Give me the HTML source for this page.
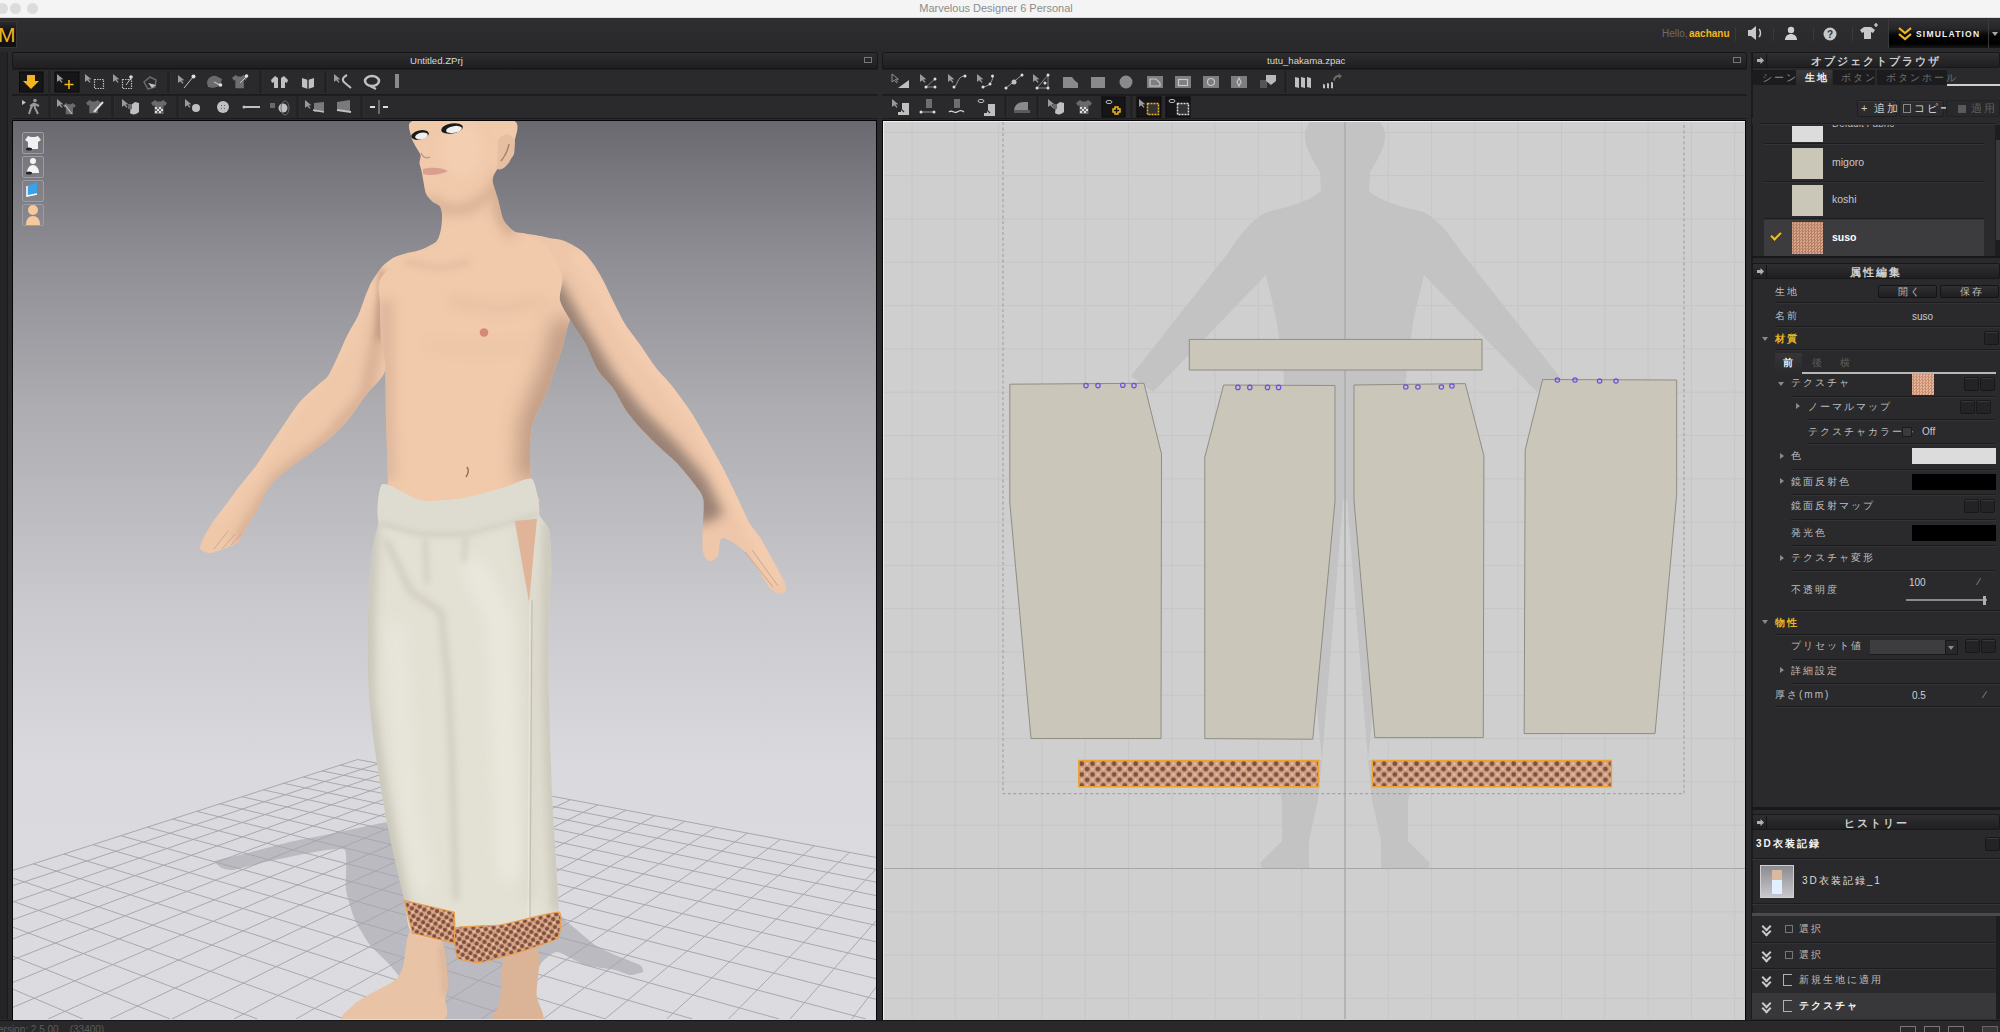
<!DOCTYPE html>
<html><head><meta charset="utf-8">
<style>
*{margin:0;padding:0;box-sizing:border-box}
html,body{width:2000px;height:1032px;overflow:hidden;background:#2a2a2c;font-family:"Liberation Sans",sans-serif;color:#bdbdbd}
.a{position:absolute}
#title{left:0;top:0;width:2000px;height:18px;background:#f4f4f4;border-bottom:1px solid #d8d8d8}
#title .t{left:0;width:1992px;top:2px;text-align:center;font-size:11px;color:#8c8c8c}
.dot{width:11px;height:11px;border-radius:50%;background:#dcdcdc;top:3px}
#appbar{left:0;top:18px;width:2000px;height:34px;background:linear-gradient(#2e2e31,#29292b)}
.hdr{height:17px;top:52px;background:linear-gradient(#2d2d30,#1f1f21);border:1px solid #161618;border-radius:2px;font-size:9.6px;color:#d8d8d8;text-align:center;line-height:15px}
.tb{background:#2a2a2c;border-top:1px solid #1e1e20;border-bottom:1px solid #1c1c1e}
.view3d{left:13px;top:121px;width:863px;height:899px;box-shadow:0 0 0 1px #050507;background:linear-gradient(#6a6970 0px,#8e8d93 134px,#adacb1 284px,#cac9ce 484px,#dad9de 644px,#dcdbe0 898px);overflow:hidden}
.view2d{left:883px;top:121px;width:862px;height:899px;box-shadow:0 0 0 1px #050507;background:#cfcfcf;overflow:hidden;border-top:1px solid #f0f0f0;border-left:1px solid #f0f0f0}
#right{left:1751px;top:52px;width:249px;height:967px;background:#2a2a2c;border-left:2px solid #1b1b1d}
#bottom{left:0;top:1020px;width:2000px;height:12px;background:#29292b;border-top:1px solid #151517}

.tx{position:absolute;font-size:10px;line-height:12px;color:#bfbfbf;white-space:nowrap}
.yl{color:#e9b227;font-weight:bold}
.dv{position:absolute;height:1px;background:#1c1c1f;box-shadow:0 1px 0 #333337}
.rh{position:absolute;left:1752px;width:248px;height:16px;background:linear-gradient(#2f2f32,#1f1f22);border:1px solid #18181a;border-radius:2px}
.rh .tx{width:100%;text-align:center;top:2px;color:#cfcfcf;font-size:10.5px;font-weight:bold}
.arr{position:absolute;width:0;height:0;border-left:4px solid #8a8a8a;border-top:3.5px solid transparent;border-bottom:3.5px solid transparent}
.arrd{position:absolute;width:0;height:0;border-top:4px solid #8a8a8a;border-left:3.5px solid transparent;border-right:3.5px solid transparent}
.sbtn{position:absolute;width:15px;height:14px;background:#232325;border:1px solid #18181a;border-radius:2px;box-shadow:inset 0 1px 0 #38383b}
.blk{position:absolute;background:#000}
</style></head><body>
<div id="title" class="a">
  <div class="a dot" style="left:-3px"></div>
  <div class="a dot" style="left:10px"></div>
  <div class="a dot" style="left:27px"></div>
  <div class="a t">Marvelous Designer 6 Personal</div>
</div>
<div id="appbar" class="a"></div>
<div class="a" style="left:0;top:21px;width:17px;height:27px;background:linear-gradient(#2a2a2c,#0e0e0e 50%,#121212);border:1px solid #353537;border-left:none"></div>
<div class="a" style="left:-2px;top:23px;font-size:21px;line-height:24px;color:#f0b222;font-family:'Liberation Sans',sans-serif">M</div>
<div class="tx" style="left:1662px;top:28px;color:#6c6c6c;font-size:10px">Hello,</div><div class="tx" style="left:1689px;top:28px;color:#f2b51c;font-size:10px;font-weight:bold">aachanu</div>
<div class="a" style="left:1735px;top:27px;width:1px;height:14px;background:#3a3a3c"></div>
<div class="a" style="left:1773px;top:27px;width:1px;height:14px;background:#3a3a3c"></div>
<div class="a" style="left:1813px;top:27px;width:1px;height:14px;background:#3a3a3c"></div>
<div class="a" style="left:1852px;top:27px;width:1px;height:14px;background:#3a3a3c"></div>
<svg class="a" style="left:1740px;top:20px" width="150" height="30" viewBox="1740 20 150 30">
<path d="M1748 30h3l5-4v14l-5-4h-3z" fill="#c8c8c8"/><path d="M1759 29c2 2 2 6 0 8" stroke="#c8c8c8" stroke-width="1.5" fill="none"/>
<circle cx="1791" cy="30" r="3.2" fill="#d0d0d0"/><path d="M1785 40c0-4 3-6 6-6s6 2 6 6z" fill="#d0d0d0"/>
<circle cx="1830" cy="34" r="6.5" fill="#c8c8c8"/><text x="1827" y="38" font-size="10" font-weight="bold" fill="#333" font-family="Liberation Sans">?</text>
<path d="M1860 30l4-3h7l4 3l-2 3l-2-1v7h-7v-7l-2 1z" fill="#c8c8c8"/><path d="M1874 25h4M1876 23v4" stroke="#e0e0e0" stroke-width="1.2"/>
</svg>
<div class="a" style="left:1888px;top:19px;width:100px;height:29px;background:linear-gradient(#313134 0%,#262628 35%,#070707 55%,#000 85%,#161617 100%);border-left:1px solid #3a3a3c"></div>
<div class="a" style="left:1988px;top:19px;width:12px;height:29px;background:linear-gradient(#313134 0%,#262628 35%,#070707 55%,#000 85%,#161617 100%);border-left:1px solid #3a3a3c"></div>
<svg class="a" style="left:1896px;top:26px" width="20" height="16" viewBox="0 0 20 16"><path d="M3 2l6 5l6-5M3 8l6 5l6-5" stroke="#f2b51c" stroke-width="2.2" fill="none"/></svg>
<div class="tx" style="left:1916px;top:28px;color:#f0f0f0;font-size:8.5px;font-weight:bold;letter-spacing:1.2px">SIMULATION</div>
<div class="arrd" style="left:1992px;top:32px;border-top-color:#aaa"></div>

<!-- left strip -->
<div class="a" style="left:0;top:52px;width:8px;height:967px;background:#242426;border-right:1px solid #1a1a1c"></div>
<!-- 3D panel -->
<div class="a hdr" style="left:12px;width:866px"><span class="a" style="left:397px;top:0">Untitled.ZPrj</span><div class="a" style="left:851px;top:4px;width:8px;height:6px;border:1.5px solid #777"></div></div>
<div class="a tb" style="left:12px;top:69px;width:866px;height:26px"></div>
<div class="a tb" style="left:12px;top:95px;width:866px;height:24px"></div>
<div class="a view3d"><svg width="863" height="898" viewBox="13 121 863 898" style="position:absolute;left:0;top:0">
<defs><pattern id="hem2d" width="10.8" height="10.8" patternUnits="userSpaceOnUse" x="1079" y="761"><rect width="10.8" height="10.8" fill="#d2a184"/><circle cx="2.7" cy="2.7" r="2.4" fill="#7a5143"/><circle cx="8.1" cy="8.1" r="2.4" fill="#7a5143"/><circle cx="8.1" cy="2.7" r="1" fill="#ecd0b0"/><circle cx="2.7" cy="8.1" r="1" fill="#ecd0b0"/></pattern></defs>
<path d="M357.6 759.5L876.0 857.4 M340.2 765.1L876.0 869.4 M322.1 770.9L876.0 882.1 M303.3 777.0L876.0 895.6 M283.7 783.3L876.0 910.0 M263.3 789.8L876.0 925.4 M242.0 796.7L876.0 941.9 M219.8 803.8L876.0 959.6 M196.7 811.3L876.0 978.7 M172.5 819.0L876.0 999.3 M147.2 827.2L866.1 1019.0 M120.8 835.7L779.3 1019.0 M93.0 844.6L692.5 1019.0 M63.9 854.0L605.6 1019.0 M33.3 863.8L518.6 1019.0 M13.0 878.1L431.6 1019.0 M13.0 901.3L344.5 1019.0 M13.0 927.2L257.4 1019.0 M13.0 956.3L170.2 1019.0 M13.0 989.2L82.9 1019.0 M357.6 759.5L13.0 870.4 M378.8 763.5L13.0 885.6 M400.5 767.6L13.0 901.9 M422.8 771.8L13.0 919.6 M445.8 776.1L13.0 938.8 M469.3 780.6L13.0 959.7 M493.6 785.2L13.0 982.4 M518.5 789.9L13.0 1007.4 M544.2 794.7L48.1 1019.0 M570.6 799.7L110.1 1019.0 M597.9 804.9L172.0 1019.0 M625.9 810.2L234.0 1019.0 M654.9 815.6L295.9 1019.0 M684.8 821.3L357.8 1019.0 M715.6 827.1L419.6 1019.0 M747.4 833.1L481.4 1019.0 M780.3 839.4L543.2 1019.0 M814.3 845.8L605.0 1019.0 M849.5 852.4L666.7 1019.0 M876.0 869.3L728.5 1019.0 M876.0 920.8L790.1 1019.0 M876.0 987.3L851.8 1019.0" stroke="#a9a8ae" stroke-width="1" fill="none"/>
<defs>
<filter id="bl3" filterUnits="userSpaceOnUse" x="0" y="100" width="900" height="950"><feGaussianBlur stdDeviation="3"/></filter>
<filter id="bl6" filterUnits="userSpaceOnUse" x="0" y="100" width="900" height="950"><feGaussianBlur stdDeviation="6"/></filter>
<filter id="bl10" filterUnits="userSpaceOnUse" x="0" y="100" width="900" height="950"><feGaussianBlur stdDeviation="10"/></filter>
<pattern id="hem" width="8" height="8" patternUnits="userSpaceOnUse" patternTransform="rotate(-12)"><rect width="8" height="8" fill="#d6a384"/><circle cx="2" cy="2" r="2.1" fill="#7e4f40"/><circle cx="6" cy="6" r="2.1" fill="#7e4f40"/><circle cx="6" cy="2" r="0.9" fill="#f0d0a8"/></pattern>
<clipPath id="cT"><path d="M412.6 121.0C405.7 123.1 410.5 132.5 411.0 136.0C411.5 139.5 414.7 144.5 416.0 147.0C417.3 149.5 420.0 152.9 420.5 155.0C421.0 157.1 419.4 160.9 419.5 163.0C419.6 165.1 421.0 168.5 421.5 171.0C422.0 173.5 422.9 178.9 423.5 182.0C424.1 185.1 424.9 191.3 426.2 194.0C427.5 196.7 431.2 200.5 433.0 202.1C434.8 203.7 438.6 204.6 439.8 206.2C441.0 207.8 441.8 211.0 442.0 214.0C442.2 217.0 441.8 225.3 441.0 229.0C440.2 232.7 438.8 239.2 436.0 242.0C433.2 244.8 424.7 248.3 420.0 250.0C415.3 251.7 406.1 252.7 401.0 255.0C395.9 257.3 385.3 263.0 382.0 267.0C378.7 271.0 376.4 279.9 376.0 285.0C375.6 290.1 378.5 297.8 379.0 305.0C379.5 312.2 379.2 330.9 380.0 339.0C380.8 347.1 384.2 355.6 385.0 366.0C385.8 376.4 385.6 401.8 386.0 417.0C386.4 432.2 387.5 467.3 388.0 480.0C388.5 492.7 370.9 508.5 390.0 512.0C409.1 515.5 512.2 509.7 531.0 506.0C549.8 502.3 531.1 491.7 531.0 484.0C530.9 476.3 529.7 456.3 530.0 448.0C530.3 439.7 530.9 428.9 533.0 422.0C535.1 415.1 542.8 402.7 545.6 396.0C548.4 389.3 551.8 378.3 554.0 372.0C556.2 365.7 560.1 355.1 562.0 349.0C563.9 342.9 565.9 332.5 568.0 326.0C570.1 319.5 575.1 307.5 578.0 300.0C580.9 292.5 590.4 276.9 590.0 270.0C589.6 263.1 581.0 252.4 575.0 248.0C569.0 243.6 552.3 239.0 545.0 237.0C537.7 235.0 524.3 233.9 520.0 233.0C515.7 232.1 515.2 232.4 513.0 230.6C510.8 228.8 505.5 224.0 503.5 219.8C501.5 215.6 499.5 204.7 498.1 199.4C496.7 194.1 492.7 184.6 492.7 180.4C492.7 176.2 495.4 171.5 498.1 168.2C500.8 164.9 510.8 159.4 513.0 156.0C515.2 152.6 514.2 147.1 514.4 142.4C514.6 137.7 521.3 124.0 514.4 121.0C507.5 118.0 476.6 120.0 463.0 120.0C449.4 120.0 419.5 118.9 412.6 121.0Z"/></clipPath><clipPath id="cL"><path d="M440.0 240.0C446.4 236.5 434.9 247.3 431.0 249.0C427.1 250.7 415.8 251.9 411.0 253.0C406.2 254.1 398.9 255.1 395.0 257.0C391.1 258.9 385.2 263.5 382.0 267.0C378.8 270.5 373.4 278.6 371.0 283.0C368.6 287.4 365.7 295.6 364.0 300.0C362.3 304.4 360.3 311.2 358.0 316.0C355.7 320.8 349.7 330.7 347.0 336.0C344.3 341.3 340.5 350.7 338.0 356.0C335.5 361.3 330.7 372.1 328.0 376.0C325.3 379.9 321.9 381.4 318.0 385.0C314.1 388.6 304.2 396.7 299.0 403.0C293.8 409.3 282.9 426.4 279.0 432.0C275.1 437.6 273.1 440.5 270.0 445.0C266.9 449.5 260.1 460.4 256.0 466.0C251.9 471.6 242.7 482.2 239.0 487.0C235.3 491.8 231.2 497.7 228.0 502.0C224.8 506.3 218.1 514.6 215.0 519.0C211.9 523.4 207.0 531.1 205.0 535.0C203.0 538.9 200.0 545.7 200.0 548.0C200.0 550.3 203.5 551.3 205.0 552.0C206.5 552.7 208.9 553.3 211.0 553.0C213.1 552.7 217.4 551.5 221.0 550.0C224.6 548.5 234.7 544.9 238.0 542.0C241.3 539.1 243.2 532.7 246.0 528.0C248.8 523.3 256.3 511.8 259.0 507.0C261.7 502.2 263.3 496.0 266.0 492.0C268.7 488.0 274.6 481.1 279.0 477.0C283.4 472.9 292.5 465.9 299.0 461.0C305.5 456.1 321.5 445.5 328.0 440.0C334.5 434.5 342.9 426.0 348.0 420.0C353.1 414.0 361.1 401.5 366.0 395.0C370.9 388.5 383.0 378.5 385.0 371.0C387.0 363.5 381.7 347.8 381.0 339.0C380.3 330.2 379.7 313.5 380.0 305.0C380.3 296.5 375.0 283.7 383.0 275.0C391.0 266.3 433.6 243.5 440.0 240.0Z"/></clipPath><clipPath id="cR"><path d="M520.0 233.0C519.3 231.9 534.3 236.0 540.0 237.0C545.7 238.0 557.4 238.6 563.0 240.5C568.6 242.4 577.9 247.7 582.0 251.0C586.1 254.3 591.1 260.9 594.0 265.0C596.9 269.1 601.5 277.2 604.0 282.0C606.5 286.8 610.2 295.4 613.0 301.0C615.8 306.6 621.3 318.0 625.0 324.0C628.7 330.0 636.9 340.1 641.0 346.0C645.1 351.9 651.9 362.7 656.0 368.0C660.1 373.3 667.4 380.1 672.0 386.0C676.6 391.9 686.2 404.9 690.8 411.9C695.4 418.9 702.2 431.0 706.3 438.2C710.4 445.4 718.1 459.1 721.8 466.1C725.5 473.1 730.5 483.3 734.2 490.9C737.9 498.5 745.9 516.7 749.4 523.0C752.9 529.3 757.0 532.5 760.4 538.0C763.8 543.5 771.6 557.6 775.0 564.0C778.4 570.4 784.8 582.1 786.0 586.0C787.2 589.9 785.2 592.1 784.0 593.0C782.8 593.9 779.1 593.9 777.0 593.0C774.9 592.1 770.4 588.9 768.0 586.0C765.6 583.1 762.5 575.9 759.0 571.0C755.5 566.1 746.9 553.4 742.0 549.0C737.1 544.6 725.2 537.1 722.0 538.0C718.8 538.9 719.7 552.9 718.0 556.0C716.3 559.1 711.0 561.5 709.0 561.0C707.0 560.5 703.9 556.1 703.0 552.0C702.1 547.9 702.5 537.1 702.5 530.0C702.5 522.9 704.6 505.5 703.2 499.0C701.8 492.5 695.8 486.4 692.3 481.6C688.8 476.8 681.1 467.5 676.8 463.0C672.5 458.5 664.5 452.0 659.8 447.5C655.1 443.0 645.7 434.0 641.2 429.0C636.7 424.0 629.4 415.4 625.7 410.0C622.0 404.6 617.0 393.9 613.3 388.6C609.6 383.3 601.6 376.1 597.8 370.0C594.0 363.9 588.6 349.5 585.0 343.0C581.4 336.5 574.3 326.7 571.0 321.0C567.7 315.3 561.2 306.1 560.0 300.0C558.8 293.9 564.0 282.3 562.0 275.0C560.0 267.7 550.6 250.6 545.0 245.0C539.4 239.4 520.7 234.1 520.0 233.0Z"/></clipPath><clipPath id="cP"><path d="M382.4 484.2C387.4 481.6 411.7 498.8 421.0 500.5C430.3 502.2 452.3 499.9 461.8 498.5C471.3 497.1 494.2 490.6 502.4 488.3C510.6 486.0 527.7 476.2 532.0 479.2C536.3 482.2 537.0 507.8 539.0 513.8C541.0 519.8 547.9 524.2 549.3 531.0C550.7 537.8 551.5 559.9 551.3 571.8C551.1 583.7 548.3 617.8 548.0 632.8C547.7 647.8 548.5 681.4 549.0 700.0C549.5 718.6 551.2 773.7 552.0 792.4C552.8 811.1 555.2 846.0 556.0 860.0C556.8 874.0 558.7 903.1 558.9 912.2C559.1 921.3 562.1 933.8 557.6 938.4C553.1 943.0 529.0 949.2 520.0 952.0C511.0 954.8 487.7 961.9 480.4 962.6C473.1 963.3 460.4 960.2 457.5 958.0C454.6 955.8 460.9 946.5 455.6 943.6C450.3 940.7 418.4 938.2 412.4 933.2C406.4 928.2 406.5 909.0 404.5 900.5C402.5 892.0 397.1 869.5 395.0 860.0C392.9 850.5 388.4 829.8 386.4 819.3C384.4 808.8 379.7 780.7 378.0 770.0C376.3 759.3 373.2 738.5 372.0 728.0C370.8 717.5 368.6 693.5 368.1 680.0C367.6 666.5 367.6 627.4 368.1 612.4C368.6 597.4 371.0 561.8 372.2 551.4C373.4 541.0 377.1 530.8 378.3 523.0C379.5 515.2 377.4 486.8 382.4 484.2Z"/></clipPath></defs><path d="M390.0 822.0C380.8 822.5 348.3 830.3 340.0 832.0C331.7 833.7 298.3 840.1 290.0 842.0C281.7 843.9 246.2 853.4 240.0 855.0C233.8 856.6 216.5 859.9 215.0 861.0C213.5 862.1 220.5 867.2 222.0 868.0C223.5 868.8 229.4 870.5 233.0 870.0C236.6 869.5 258.2 863.5 265.0 862.0C271.8 860.5 308.3 853.0 315.0 852.0C321.7 851.0 342.4 846.8 345.0 850.0C347.6 853.2 345.2 884.2 346.0 890.0C346.8 895.8 353.0 915.4 355.0 920.0C357.0 924.6 367.1 941.2 370.0 945.0C372.9 948.8 386.7 961.2 390.0 965.0C393.3 968.8 406.7 985.5 410.0 990.0C413.3 994.5 420.8 1016.6 430.0 1019.0C439.2 1021.4 510.8 1023.5 520.0 1019.0C529.2 1014.5 536.9 970.6 540.0 965.0C543.1 959.4 553.2 952.0 557.0 952.0C560.8 952.0 580.2 963.5 585.0 965.0C589.8 966.5 611.2 969.2 615.0 970.0C618.8 970.8 627.7 974.8 630.0 975.0C632.3 975.2 642.2 972.8 643.0 972.0C643.8 971.2 642.3 966.4 640.0 965.0C637.7 963.6 618.8 956.7 615.0 955.0C611.2 953.3 598.2 947.1 595.0 945.0C591.8 942.9 580.2 932.9 577.0 930.0C573.8 927.1 559.2 916.7 557.0 910.0C554.8 903.3 558.9 857.0 550.0 850.0C541.1 843.0 463.3 828.3 450.0 826.0C436.7 823.7 399.2 821.5 390.0 822.0Z" fill="#a8a7ae" opacity="0.62"/><path d="M412.6 121.0C405.7 123.1 410.5 132.5 411.0 136.0C411.5 139.5 414.7 144.5 416.0 147.0C417.3 149.5 420.0 152.9 420.5 155.0C421.0 157.1 419.4 160.9 419.5 163.0C419.6 165.1 421.0 168.5 421.5 171.0C422.0 173.5 422.9 178.9 423.5 182.0C424.1 185.1 424.9 191.3 426.2 194.0C427.5 196.7 431.2 200.5 433.0 202.1C434.8 203.7 438.6 204.6 439.8 206.2C441.0 207.8 441.8 211.0 442.0 214.0C442.2 217.0 441.8 225.3 441.0 229.0C440.2 232.7 438.8 239.2 436.0 242.0C433.2 244.8 424.7 248.3 420.0 250.0C415.3 251.7 406.1 252.7 401.0 255.0C395.9 257.3 385.3 263.0 382.0 267.0C378.7 271.0 376.4 279.9 376.0 285.0C375.6 290.1 378.5 297.8 379.0 305.0C379.5 312.2 379.2 330.9 380.0 339.0C380.8 347.1 384.2 355.6 385.0 366.0C385.8 376.4 385.6 401.8 386.0 417.0C386.4 432.2 387.5 467.3 388.0 480.0C388.5 492.7 370.9 508.5 390.0 512.0C409.1 515.5 512.2 509.7 531.0 506.0C549.8 502.3 531.1 491.7 531.0 484.0C530.9 476.3 529.7 456.3 530.0 448.0C530.3 439.7 530.9 428.9 533.0 422.0C535.1 415.1 542.8 402.7 545.6 396.0C548.4 389.3 551.8 378.3 554.0 372.0C556.2 365.7 560.1 355.1 562.0 349.0C563.9 342.9 565.9 332.5 568.0 326.0C570.1 319.5 575.1 307.5 578.0 300.0C580.9 292.5 590.4 276.9 590.0 270.0C589.6 263.1 581.0 252.4 575.0 248.0C569.0 243.6 552.3 239.0 545.0 237.0C537.7 235.0 524.3 233.9 520.0 233.0C515.7 232.1 515.2 232.4 513.0 230.6C510.8 228.8 505.5 224.0 503.5 219.8C501.5 215.6 499.5 204.7 498.1 199.4C496.7 194.1 492.7 184.6 492.7 180.4C492.7 176.2 495.4 171.5 498.1 168.2C500.8 164.9 510.8 159.4 513.0 156.0C515.2 152.6 514.2 147.1 514.4 142.4C514.6 137.7 521.3 124.0 514.4 121.0C507.5 118.0 476.6 120.0 463.0 120.0C449.4 120.0 419.5 118.9 412.6 121.0Z" fill="#f1c9ab"/><g clip-path="url(#cT)"><path d="M568.0 320.0 L554.0 372.0 L533.0 422.0 L530.0 480.0" stroke="#b8947e" stroke-width="26" fill="none" filter="url(#bl10)" opacity="0.9"/><path d="M386.0 300.0 L386.0 417.0 L388.0 480.0" stroke="#d6b198" stroke-width="14" fill="none" filter="url(#bl6)" opacity="0.8"/><path d="M498.0 175.0 L500.0 215.0 L513.0 235.0" stroke="#c09a82" stroke-width="10" fill="none" filter="url(#bl6)" opacity="0.7"/><path d="M428.0 198.0 L445.0 210.0 L470.0 208.0 L495.0 190.0" stroke="#c9a38a" stroke-width="9" fill="none" filter="url(#bl6)" opacity="0.75"/><path d="M405.0 262.0 L440.0 268.0 L470.0 262.0" stroke="#dcb79d" stroke-width="6" fill="none" filter="url(#bl3)" opacity="0.6"/><path d="M450.0 300.0 L500.0 310.0 L545.0 300.0" stroke="#dcb79d" stroke-width="8" fill="none" filter="url(#bl6)" opacity="0.5"/><path d="M430.0 345.0 L480.0 350.0 L530.0 345.0" stroke="#e2bda3" stroke-width="6" fill="none" filter="url(#bl6)" opacity="0.5"/><ellipse cx="462" cy="150" rx="22" ry="28" fill="#f5d2b6" filter="url(#bl6)" opacity="0.6"/></g><path d="M440.0 240.0C446.4 236.5 434.9 247.3 431.0 249.0C427.1 250.7 415.8 251.9 411.0 253.0C406.2 254.1 398.9 255.1 395.0 257.0C391.1 258.9 385.2 263.5 382.0 267.0C378.8 270.5 373.4 278.6 371.0 283.0C368.6 287.4 365.7 295.6 364.0 300.0C362.3 304.4 360.3 311.2 358.0 316.0C355.7 320.8 349.7 330.7 347.0 336.0C344.3 341.3 340.5 350.7 338.0 356.0C335.5 361.3 330.7 372.1 328.0 376.0C325.3 379.9 321.9 381.4 318.0 385.0C314.1 388.6 304.2 396.7 299.0 403.0C293.8 409.3 282.9 426.4 279.0 432.0C275.1 437.6 273.1 440.5 270.0 445.0C266.9 449.5 260.1 460.4 256.0 466.0C251.9 471.6 242.7 482.2 239.0 487.0C235.3 491.8 231.2 497.7 228.0 502.0C224.8 506.3 218.1 514.6 215.0 519.0C211.9 523.4 207.0 531.1 205.0 535.0C203.0 538.9 200.0 545.7 200.0 548.0C200.0 550.3 203.5 551.3 205.0 552.0C206.5 552.7 208.9 553.3 211.0 553.0C213.1 552.7 217.4 551.5 221.0 550.0C224.6 548.5 234.7 544.9 238.0 542.0C241.3 539.1 243.2 532.7 246.0 528.0C248.8 523.3 256.3 511.8 259.0 507.0C261.7 502.2 263.3 496.0 266.0 492.0C268.7 488.0 274.6 481.1 279.0 477.0C283.4 472.9 292.5 465.9 299.0 461.0C305.5 456.1 321.5 445.5 328.0 440.0C334.5 434.5 342.9 426.0 348.0 420.0C353.1 414.0 361.1 401.5 366.0 395.0C370.9 388.5 383.0 378.5 385.0 371.0C387.0 363.5 381.7 347.8 381.0 339.0C380.3 330.2 379.7 313.5 380.0 305.0C380.3 296.5 375.0 283.7 383.0 275.0C391.0 266.3 433.6 243.5 440.0 240.0Z" fill="#efc8aa"/><g clip-path="url(#cL)"><path d="M385.0 300.0 L366.0 395.0 L328.0 440.0 L279.0 477.0 L259.0 507.0 L238.0 542.0" stroke="#c9a189" stroke-width="10" fill="none" filter="url(#bl6)" opacity="0.8"/><path d="M395.0 257.0 L364.0 300.0 L338.0 356.0 L299.0 403.0 L256.0 466.0 L215.0 519.0" stroke="#f5d0b3" stroke-width="8" fill="none" filter="url(#bl6)" opacity="0.7"/><path d="M382.0 270.0 L379.0 340.0" stroke="#a88470" stroke-width="5" fill="none" filter="url(#bl3)" opacity="0.7"/></g><path d="M520.0 233.0C519.3 231.9 534.3 236.0 540.0 237.0C545.7 238.0 557.4 238.6 563.0 240.5C568.6 242.4 577.9 247.7 582.0 251.0C586.1 254.3 591.1 260.9 594.0 265.0C596.9 269.1 601.5 277.2 604.0 282.0C606.5 286.8 610.2 295.4 613.0 301.0C615.8 306.6 621.3 318.0 625.0 324.0C628.7 330.0 636.9 340.1 641.0 346.0C645.1 351.9 651.9 362.7 656.0 368.0C660.1 373.3 667.4 380.1 672.0 386.0C676.6 391.9 686.2 404.9 690.8 411.9C695.4 418.9 702.2 431.0 706.3 438.2C710.4 445.4 718.1 459.1 721.8 466.1C725.5 473.1 730.5 483.3 734.2 490.9C737.9 498.5 745.9 516.7 749.4 523.0C752.9 529.3 757.0 532.5 760.4 538.0C763.8 543.5 771.6 557.6 775.0 564.0C778.4 570.4 784.8 582.1 786.0 586.0C787.2 589.9 785.2 592.1 784.0 593.0C782.8 593.9 779.1 593.9 777.0 593.0C774.9 592.1 770.4 588.9 768.0 586.0C765.6 583.1 762.5 575.9 759.0 571.0C755.5 566.1 746.9 553.4 742.0 549.0C737.1 544.6 725.2 537.1 722.0 538.0C718.8 538.9 719.7 552.9 718.0 556.0C716.3 559.1 711.0 561.5 709.0 561.0C707.0 560.5 703.9 556.1 703.0 552.0C702.1 547.9 702.5 537.1 702.5 530.0C702.5 522.9 704.6 505.5 703.2 499.0C701.8 492.5 695.8 486.4 692.3 481.6C688.8 476.8 681.1 467.5 676.8 463.0C672.5 458.5 664.5 452.0 659.8 447.5C655.1 443.0 645.7 434.0 641.2 429.0C636.7 424.0 629.4 415.4 625.7 410.0C622.0 404.6 617.0 393.9 613.3 388.6C609.6 383.3 601.6 376.1 597.8 370.0C594.0 363.9 588.6 349.5 585.0 343.0C581.4 336.5 574.3 326.7 571.0 321.0C567.7 315.3 561.2 306.1 560.0 300.0C558.8 293.9 564.0 282.3 562.0 275.0C560.0 267.7 550.6 250.6 545.0 245.0C539.4 239.4 520.7 234.1 520.0 233.0Z" fill="#eec6a9"/><g clip-path="url(#cR)"><path d="M548.0 285.0 L575.0 333.0 L603.0 380.0 L633.0 418.0 L667.0 452.0 L695.0 485.0 L712.0 520.0" stroke="#8f7a70" stroke-width="26" fill="none" filter="url(#bl6)" opacity="0.9"/><path d="M575.0 250.0 L605.0 295.0 L632.0 340.0 L665.0 380.0 L703.0 430.0 L728.0 480.0 L755.0 535.0 L780.0 585.0" stroke="#f5cfb2" stroke-width="14" fill="none" filter="url(#bl6)" opacity="0.85"/></g><path d="M497 169c8 3 17-10 18-27c-2-10-12-9-17-2z" fill="#e6bfa3"/><path d="M501 161c4-5 7-11 8-17" stroke="#a88068" stroke-width="1.5" fill="none"/><path d="M423 169c8-2 18-2 25 2c-8 4-18 5-25 3z" fill="#d9a090"/><path d="M421 153c2 4 5 6 9 4" stroke="#b89684" stroke-width="1.2" fill="none"/><ellipse cx="420" cy="135" rx="9" ry="4.6" fill="#1a1a1a" transform="rotate(-12 420 135)"/><ellipse cx="421.5" cy="136" rx="6.5" ry="3.2" fill="#f0f0f0" transform="rotate(-12 421.5 136)"/><ellipse cx="452" cy="128.5" rx="11" ry="5" fill="#1a1a1a" transform="rotate(-10 452 128.5)"/><ellipse cx="454" cy="129.5" rx="8" ry="3.4" fill="#f0f0f0" transform="rotate(-10 454 129.5)"/><circle cx="484" cy="332.5" r="4.3" fill="#d58a73"/><path d="M466 477c2-3 3-7 1-10" stroke="#9a6e5a" stroke-width="1.5" fill="none"/><path d="M214 549l14-18M222 549l13-15M231 545l11-12" stroke="#c9a08a" stroke-width="1" fill="none" opacity="0.8"/><path d="M745 552l28 35M752 550l26 36" stroke="#c49c86" stroke-width="1" fill="none" opacity="0.8"/><path d="M411.0 930.0C416.1 926.5 436.3 933.1 441.2 940.0C446.1 946.9 447.2 973.8 447.7 981.6C448.2 989.4 446.1 993.3 445.1 998.6C444.1 1003.9 453.2 1018.0 440.0 1021.0C426.8 1024.0 357.5 1023.1 346.0 1021.0C334.5 1018.9 350.4 1008.5 353.5 1005.0C356.6 1001.5 363.7 997.9 369.2 994.6C374.7 991.3 390.5 983.8 395.0 980.0C399.5 976.2 401.1 972.6 403.2 965.9C405.3 959.2 405.9 933.5 411.0 930.0Z" fill="#e9c3a6"/><path d="M505.3 955.0C510.4 948.2 533.8 944.7 538.0 950.0C542.2 955.3 536.1 985.1 536.6 994.6C537.1 1004.1 547.6 1017.5 541.9 1021.0C536.2 1024.5 499.1 1023.7 493.5 1021.0C487.9 1018.3 498.4 1009.8 500.0 1001.0C501.6 992.2 500.2 961.8 505.3 955.0Z" fill="#dbb497"/><path d="M441 945c3 15 5 30 4 50" stroke="#d2ae95" stroke-width="4" fill="none" filter="url(#bl3)"/><path d="M382.4 484.2C387.4 481.6 411.7 498.8 421.0 500.5C430.3 502.2 452.3 499.9 461.8 498.5C471.3 497.1 494.2 490.6 502.4 488.3C510.6 486.0 527.7 476.2 532.0 479.2C536.3 482.2 537.0 507.8 539.0 513.8C541.0 519.8 547.9 524.2 549.3 531.0C550.7 537.8 551.5 559.9 551.3 571.8C551.1 583.7 548.3 617.8 548.0 632.8C547.7 647.8 548.5 681.4 549.0 700.0C549.5 718.6 551.2 773.7 552.0 792.4C552.8 811.1 555.2 846.0 556.0 860.0C556.8 874.0 558.7 903.1 558.9 912.2C559.1 921.3 562.1 933.8 557.6 938.4C553.1 943.0 529.0 949.2 520.0 952.0C511.0 954.8 487.7 961.9 480.4 962.6C473.1 963.3 460.4 960.2 457.5 958.0C454.6 955.8 460.9 946.5 455.6 943.6C450.3 940.7 418.4 938.2 412.4 933.2C406.4 928.2 406.5 909.0 404.5 900.5C402.5 892.0 397.1 869.5 395.0 860.0C392.9 850.5 388.4 829.8 386.4 819.3C384.4 808.8 379.7 780.7 378.0 770.0C376.3 759.3 373.2 738.5 372.0 728.0C370.8 717.5 368.6 693.5 368.1 680.0C367.6 666.5 367.6 627.4 368.1 612.4C368.6 597.4 371.0 561.8 372.2 551.4C373.4 541.0 377.1 530.8 378.3 523.0C379.5 515.2 377.4 486.8 382.4 484.2Z" fill="#e3e0d4"/><g clip-path="url(#cP)"><path d="M372.0 520.0 L368.0 612.0 L368.0 700.0 L378.0 770.0 L395.0 860.0 L405.0 920.0" stroke="#b9b7a9" stroke-width="10" fill="none" filter="url(#bl6)" opacity="0.9"/><path d="M549.0 520.0 L548.0 632.0 L549.0 700.0 L552.0 792.0 L558.0 912.0" stroke="#bdbbad" stroke-width="10" fill="none" filter="url(#bl6)" opacity="0.9"/><path d="M386.0 540.0 L411.0 592.0 L441.0 612.0 L448.0 680.0 L452.0 760.0 L456.0 900.0" stroke="#c4c2b4" stroke-width="6" fill="none" filter="url(#bl3)" opacity="0.6"/><path d="M520.0 530.0 L531.0 610.0 L531.0 700.0 L530.0 900.0" stroke="#cfcdc0" stroke-width="6" fill="none" filter="url(#bl6)" opacity="0.7"/><path d="M470.0 560.0 L500.0 620.0 L505.0 750.0 L510.0 880.0" stroke="#f0eee4" stroke-width="18" fill="none" filter="url(#bl10)" opacity="0.8"/><path d="M395.0 620.0 L400.0 700.0 L410.0 820.0 L425.0 890.0" stroke="#efede3" stroke-width="14" fill="none" filter="url(#bl10)" opacity="0.7"/></g><path d="M382.4 484.2C386.6 482.0 413.1 499.1 421.0 500.5C428.9 501.9 453.7 499.7 461.8 498.5C469.9 497.3 495.4 490.2 502.4 488.3C509.4 486.4 528.3 476.6 532.0 479.2C535.7 481.8 540.9 509.4 539.0 513.8C537.1 518.2 519.9 520.8 512.6 522.9C505.3 525.0 475.0 533.9 465.8 535.1C456.6 536.3 429.6 536.3 421.0 535.1C412.4 533.9 383.2 528.0 379.3 522.9C375.4 517.8 378.2 486.4 382.4 484.2Z" fill="#dedcd0"/><path d="M379.3 523.0 L421.0 535.1 L465.8 535.1 L512.6 522.9 L539.0 513.8" stroke="#bdbbad" stroke-width="2" fill="none" filter="url(#bl3)"/><path d="M514.7 521L537 518.8L529 602Z" fill="#e0b499"/><path d="M425 539l2 45M465.8 537l-2 25" stroke="#c6c4b6" stroke-width="3" fill="none" filter="url(#bl3)"/><path d="M530 600L528 920" stroke="#eeece2" stroke-width="1" fill="none" opacity="0.7"/><path d="M532 600L530 920" stroke="#c2c0b3" stroke-width="1.2" fill="none"/><path d="M404.5 900.5 L454.2 912.2 L455.6 943.6 L412.4 933.2Z" fill="url(#hem)" stroke="#eaa050" stroke-width="1.2"/><path d="M455.6 928.0C458.4 925.8 493.1 926.1 500.0 925.0C506.9 923.9 555.1 911.3 558.9 912.2C562.7 913.1 560.2 935.7 557.6 938.4C555.0 941.1 525.1 950.4 520.0 952.0C514.9 953.6 484.6 962.2 480.4 962.6C476.2 963.0 459.2 960.3 457.5 958.0C455.8 955.7 452.8 930.2 455.6 928.0Z" fill="url(#hem)" stroke="#eaa050" stroke-width="1.2"/>
</svg></div>
<div class="a" style="left:22px;top:132px;width:22px;height:22px;background:rgba(255,255,255,0.04);border:1px solid #9d9ca2;border-radius:2px"></div>
<div class="a" style="left:22px;top:156px;width:22px;height:22px;background:rgba(255,255,255,0.04);border:1px solid #9d9ca2;border-radius:2px"></div>
<div class="a" style="left:22px;top:180px;width:22px;height:22px;background:rgba(255,255,255,0.04);border:1px solid #9d9ca2;border-radius:2px"></div>
<div class="a" style="left:22px;top:204px;width:22px;height:22px;background:rgba(255,255,255,0.04);border:1px solid #9d9ca2;border-radius:2px"></div>
<svg class="a" style="left:22px;top:132px" width="22" height="96" viewBox="0 0 22 96">
<path d="M6 4l-3 4l3 2v7h10v-7l3-2l-3-4l-3 1h-4z" fill="#f0f0f0"/><ellipse cx="7" cy="17" rx="3" ry="1.5" fill="#222"/>
<circle cx="11" cy="29" r="3" fill="#f4f4f4"/><path d="M5 41c0-5 3-8 6-8s6 3 6 8z" fill="#f4f4f4"/><ellipse cx="7" cy="41" rx="3" ry="1.5" fill="#222"/>
<path d="M5 54l10-4v12l-10 2z" fill="#3aa0e8"/><path d="M5 54v10l10-2" stroke="#fff" stroke-width="1.5" fill="none"/>
<circle cx="11" cy="78" r="5" fill="#f5c99c"/><path d="M4 93c0-6 3-9 7-9s7 3 7 9z" fill="#f5c99c"/>
</svg>
<!-- 2D panel -->
<div class="a hdr" style="left:882px;width:865px"><span class="a" style="left:384px;top:0">tutu_hakama.zpac</span><div class="a" style="left:850px;top:4px;width:8px;height:6px;border:1.5px solid #777"></div></div>
<div class="a tb" style="left:882px;top:69px;width:865px;height:26px"></div>
<div class="a tb" style="left:882px;top:95px;width:865px;height:24px"></div>
<div class="a view2d"><svg width="862" height="898" viewBox="883 121 862 898" style="position:absolute;left:-1px;top:-1px">
<path d="M912.0 121V1019 M955.3 121V1019 M998.6 121V1019 M1041.9 121V1019 M1085.2 121V1019 M1128.5 121V1019 M1171.8 121V1019 M1215.1 121V1019 M1258.4 121V1019 M1301.7 121V1019 M1345.0 121V1019 M1388.3 121V1019 M1431.6 121V1019 M1474.9 121V1019 M1518.2 121V1019 M1561.5 121V1019 M1604.8 121V1019 M1648.1 121V1019 M1691.4 121V1019 M1734.7 121V1019 M883 132.4H1745 M883 175.7H1745 M883 219.0H1745 M883 262.3H1745 M883 305.6H1745 M883 348.9H1745 M883 392.2H1745 M883 435.5H1745 M883 478.8H1745 M883 522.1H1745 M883 565.4H1745 M883 608.7H1745 M883 652.0H1745 M883 695.3H1745 M883 738.6H1745 M883 781.9H1745 M883 825.2H1745 M883 868.5H1745 M883 911.8H1745 M883 955.1H1745 M883 998.4H1745" stroke="#c6c6c6" stroke-width="1" fill="none"/>
<path d="M1310 121 C1308 126 1305 128 1305 135 C1305 145 1308 150 1312 158 C1315 165 1318 168 1320 172 L1321 191 C1312 200 1290 207 1270 211 C1255 215 1240 235 1229.5 251 L1131 376 L1153 392 L1266 275 C1272 300 1277 320 1278 330 C1280 345 1284 370 1284 385 L1290 500 L1300 600 L1316 700 L1322 760 L1273 760 L1282 800 L1282 841 L1260 863 L1262 868 L1309 868 L1309 841 L1318 800 L1322 760 L1343 500 L1347 500 L1368 760 L1372 800 L1381 841 L1381 868 L1428 868 L1430 863 L1408 841 L1408 800 L1417 760 L1368 760 L1374 700 L1390 600 L1400 500 L1406 385 C1406 370 1410 345 1412 330 C1413 320 1418 300 1424 275 L1537 392 L1559 376 L1460.5 251 C1450 235 1435 215 1420 211 C1400 207 1378 200 1369 191 L1370 172 C1372 168 1375 165 1378 158 C1382 150 1385 145 1385 135 C1385 128 1382 126 1380 121 Z" fill="#c3c3c3"/>
<path d="M1345 121V1019 M883 868.5H1745" stroke="#a6a6a6" stroke-width="1.2" fill="none"/>
<path d="M1003 122 V793.7 H1684 V122" stroke="#959595" stroke-width="0.9" stroke-dasharray="3 2.5" fill="none"/>
<g fill="#cac6ba" stroke="#8f8d84" stroke-width="1">
<path d="M1189.3 339.4 H1482 V370 H1189.3 Z"/>
<path d="M1009.8 384.2 L1144 383.3 L1161.5 454 L1161 738.5 L1031 738.5 L1009.8 502.4 Z"/>
<path d="M1223.6 385 L1335 385.5 L1335 501 L1312.8 739.2 L1204.8 738.6 L1204.8 457.2 Z"/>
<path d="M1354 385 L1465.3 383.6 L1483.9 455.7 L1483.3 737.6 L1374.8 737.6 L1354 501 Z"/>
<path d="M1542.6 379.5 L1676.7 380 L1676.7 494.4 L1655 733.6 L1524.2 733.6 L1525.2 449.8 Z"/>
</g>
<path d="M1078.8 760.4 H1318.6 V786.8 H1078.8 Z M1372.4 760.4 H1611.4 V786.8 H1372.4 Z" fill="url(#hem2d)" stroke="#eea032" stroke-width="1.4"/>
<g fill="none" stroke="#6a50e0" stroke-width="1.2">
<circle cx="1086" cy="385.6" r="2.2"/><circle cx="1098" cy="385.6" r="2.2"/><circle cx="1122.8" cy="385.2" r="2.2"/><circle cx="1134" cy="385.6" r="2.2"/>
<circle cx="1237.9" cy="387.4" r="2.2"/><circle cx="1249.8" cy="387.4" r="2.2"/><circle cx="1267.5" cy="387.4" r="2.2"/><circle cx="1278.6" cy="387.4" r="2.2"/>
<circle cx="1405.8" cy="387" r="2.2"/><circle cx="1417.9" cy="387" r="2.2"/><circle cx="1441.4" cy="387" r="2.2"/><circle cx="1451.9" cy="386" r="2.2"/>
<circle cx="1557.4" cy="380" r="2.2"/><circle cx="1575" cy="380" r="2.2"/><circle cx="1599.6" cy="381" r="2.2"/><circle cx="1616" cy="381" r="2.2"/>
</g>
</svg></div>
<svg class="a" style="left:0;top:0" width="1750" height="122" viewBox="0 0 1750 122"><rect x="19.5" y="72" width="23.5" height="20" fill="#161618" stroke="#0a0a0c" stroke-width="1"/><path d="M27 75h8v6h4l-8 8l-8-8h4z" fill="#f2b51c"/><rect x="48" y="71" width="3" height="22" fill="#232325"/><rect x="51" y="71" width="1" height="22" fill="#2f2f32"/><rect x="55" y="72" width="24" height="20" fill="#161618" stroke="#0a0a0c" stroke-width="1"/><path d="M57 74l0 8l2.2-1.8l2.4 2.6l1-.8l-2.2-2.6l3-.2z" fill="#9a9a9a"/><path d="M69 80v9M64.5 84.5h9" stroke="#f2b51c" stroke-width="1.6"/><path d="M85 74l0 8l2.2-1.8l2.4 2.6l1-.8l-2.2-2.6l3-.2z" fill="#9a9a9a"/><rect x="94.5" y="79.5" width="9" height="9" fill="none" stroke="#c0c0c0" stroke-width="1.2" stroke-dasharray="1.5 1"/><path d="M113 74l0 8l2.2-1.8l2.4 2.6l1-.8l-2.2-2.6l3-.2z" fill="#9a9a9a"/><rect x="122.5" y="79.5" width="9" height="9" fill="none" stroke="#c0c0c0" stroke-width="1.2" stroke-dasharray="1.5 1"/><path d="M126 85l5-7" stroke="#c0c0c0"/><circle cx="131" cy="77" r="1.8" fill="#ddd"/><path d="M144 82l6-5l6 3l-1 7l-7 2z" fill="none" stroke="#6a6a6a" stroke-width="1.5"/><path d="M148 83l8 2l-4 3z" fill="#c0c0c0"/><rect x="167" y="71" width="3" height="22" fill="#232325"/><rect x="170" y="71" width="1" height="22" fill="#2f2f32"/><path d="M178 75l0 8l2.2-1.8l2.4 2.6l1-.8l-2.2-2.6l3-.2z" fill="#9a9a9a"/><path d="M184 88l9-11" stroke="#c0c0c0" stroke-width="1"/><circle cx="193.5" cy="76.5" r="2" fill="#e0e0e0"/><path d="M207 83c0-5 5-8 9-7l6 3l-2 7l-7 2l-5-1z" fill="#6a6a6a"/><path d="M214 82l6 3" stroke="#c0c0c0" stroke-width="1.2"/><circle cx="220.5" cy="85" r="1.8" fill="#e0e0e0"/><path transform="translate(232 75) scale(0.95)" d="M4 0L0 3L2 6L3.5 5L3.5 14L12.5 14L12.5 5L14 6L16 3L12 0L10 1.5L6 1.5Z" fill="#6e6e6e"/><path d="M240 83l6-6" stroke="#c0c0c0"/><circle cx="246.5" cy="76" r="1.8" fill="#e0e0e0"/><rect x="259" y="71" width="3" height="22" fill="#232325"/><rect x="262" y="71" width="1" height="22" fill="#2f2f32"/><path d="M271 80l4-4l3 2v10h-4v-6l-2 1zM288 80l-4-4l-3 2v10h4v-6l2 1z" fill="#c0c0c0"/><path d="M302 78l6 2l6-2v9l-6 2l-6-2z" fill="#c0c0c0"/><path d="M308 73v16" stroke="#333" stroke-width="1.5"/><rect x="324" y="71" width="3" height="22" fill="#232325"/><rect x="327" y="71" width="1" height="22" fill="#2f2f32"/><path d="M334 74l0 8l2.2-1.8l2.4 2.6l1-.8l-2.2-2.6l3-.2z" fill="#9a9a9a"/><path d="M347 75c-4 2-6 5-2 8l6 5" fill="none" stroke="#c0c0c0" stroke-width="2"/><ellipse cx="372" cy="81" rx="7" ry="5" fill="none" stroke="#c0c0c0" stroke-width="2.5"/><path d="M370 86l6 3" stroke="#c0c0c0" stroke-width="2"/><rect x="395" y="74" width="4" height="14" fill="#8a8a8a"/><path d="M22 100l4 2.5l-4 2.5z" fill="#c0c0c0"/><circle cx="35" cy="100.5" r="1.8" fill="#9a9a9a"/><path d="M34 103l-3 5l-2 6M34 103l1 5l3 6M33 104l-3 2M35 104l4 2" stroke="#9a9a9a" stroke-width="2" fill="none"/><rect x="48" y="96" width="3" height="22" fill="#232325"/><rect x="51" y="96" width="1" height="22" fill="#2f2f32"/><path d="M57 99l0 8l2.2-1.8l2.4 2.6l1-.8l-2.2-2.6l3-.2z" fill="#9a9a9a"/><path transform="translate(63 103) scale(0.8)" d="M4 0L0 3L2 6L3.5 5L3.5 14L12.5 14L12.5 5L14 6L16 3L12 0L10 1.5L6 1.5Z" fill="#6a6a6a"/><path d="M65 105l7 9" stroke="#c0c0c0" stroke-width="1.2"/><path transform="translate(86 100) scale(0.95)" d="M4 0L0 3L2 6L3.5 5L3.5 14L12.5 14L12.5 5L14 6L16 3L12 0L10 1.5L6 1.5Z" fill="#6a6a6a"/><path d="M94 112l9-10" stroke="#ddd" stroke-width="2"/><rect x="111" y="96" width="3" height="22" fill="#232325"/><rect x="114" y="96" width="1" height="22" fill="#2f2f32"/><path d="M122 99l0 8l2.2-1.8l2.4 2.6l1-.8l-2.2-2.6l3-.2z" fill="#9a9a9a"/><path d="M131 105l4-3l4 1v9c-3 3-7 3-9 1z" fill="#c0c0c0"/><rect x="128" y="104" width="4" height="5" fill="#6a6a6a"/><path transform="translate(151 100) scale(1)" d="M4 0L0 3L2 6L3.5 5L3.5 14L12.5 14L12.5 5L14 6L16 3L12 0L10 1.5L6 1.5Z" fill="#6a6a6a"/><path d="M155 107h2v2h-2zM159 107h2v2h-2zM157 109h2v2h-2zM161 109h2v2h-2zM155 111h2v2h-2zM159 111h2v2h-2z" fill="#ddd"/><rect x="176" y="96" width="3" height="22" fill="#232325"/><rect x="179" y="96" width="1" height="22" fill="#2f2f32"/><path d="M185 99l0 8l2.2-1.8l2.4 2.6l1-.8l-2.2-2.6l3-.2z" fill="#9a9a9a"/><circle cx="196" cy="108" r="4" fill="#c0c0c0"/><circle cx="223" cy="107" r="6" fill="#c0c0c0"/><path d="M221 105h1v1h-1zM224 105h1v1h-1zM221 108h1v1h-1zM224 108h1v1h-1z" fill="#666"/><path d="M244 107h16" stroke="#c0c0c0" stroke-width="2"/><circle cx="244" cy="107" r="1.5" fill="#c0c0c0"/><rect x="270" y="103" width="5" height="5" fill="#6a6a6a"/><circle cx="283" cy="108" r="4.5" fill="#c0c0c0"/><ellipse cx="285" cy="108" rx="4" ry="7" fill="none" stroke="#6a6a6a"/><rect x="296" y="96" width="3" height="22" fill="#232325"/><rect x="299" y="96" width="1" height="22" fill="#2f2f32"/><path d="M305 100l0 8l2.2-1.8l2.4 2.6l1-.8l-2.2-2.6l3-.2z" fill="#9a9a9a"/><path d="M314 103l10-1v9l-10 1z" fill="#7a7a7a"/><path d="M313 110l11 2" stroke="#c0c0c0" stroke-width="1.5"/><path d="M337 102l13-2v11l-13-1z" fill="#7a7a7a"/><path d="M337 110l14 2" stroke="#c0c0c0" stroke-width="1.8"/><rect x="360" y="96" width="3" height="22" fill="#232325"/><rect x="363" y="96" width="1" height="22" fill="#2f2f32"/><path d="M370 107h5M388 107h-5" stroke="#ddd" stroke-width="2"/><path d="M379 100v14" stroke="#6a6a6a" stroke-width="2"/><path d="M892 74l0 8l2.2-1.8l2.4 2.6l1-.8l-2.2-2.6l3-.2z" fill="none" stroke="#9a9a9a" stroke-width=".9"/><path d="M898 88l11-8v8z" fill="#c0c0c0"/><path d="M920 74l0 8l2.2-1.8l2.4 2.6l1-.8l-2.2-2.6l3-.2z" fill="#9a9a9a"/><path d="M926 87l9-8M926 87h9" stroke="#9a9a9a" stroke-width=".8"/><circle cx="926" cy="87" r="1.5" fill="#ddd"/><circle cx="935" cy="87" r="1.5" fill="#ddd"/><circle cx="935" cy="79" r="1.5" fill="#ddd"/><path d="M948 74l0 8l2.2-1.8l2.4 2.6l1-.8l-2.2-2.6l3-.2z" fill="#9a9a9a"/><path d="M954 87c4-2 3-10 10-11" fill="none" stroke="#9a9a9a"/><circle cx="954" cy="87" r="1.5" fill="#ddd"/><circle cx="965" cy="76" r="1.5" fill="#ddd"/><path d="M977 74l0 8l2.2-1.8l2.4 2.6l1-.8l-2.2-2.6l3-.2z" fill="#9a9a9a"/><path d="M983 87c6-1 9-4 10-11" fill="none" stroke="#9a9a9a"/><circle cx="983" cy="87" r="1.5" fill="#ddd"/><circle cx="990" cy="84" r="1.5" fill="#ddd"/><circle cx="992.5" cy="76" r="1.5" fill="#ddd"/><path d="M1006 88l16-13" stroke="#9a9a9a"/><circle cx="1014" cy="82" r="2.5" fill="#c0c0c0"/><circle cx="1006" cy="88" r="1.5" fill="#ddd"/><circle cx="1022" cy="75" r="1.5" fill="#ddd"/><path d="M1033 74l0 8l2.2-1.8l2.4 2.6l1-.8l-2.2-2.6l3-.2z" fill="#9a9a9a"/><path d="M1037 88h11v-13z" fill="none" stroke="#9a9a9a" stroke-width=".8"/><circle cx="1037" cy="88" r="1.5" fill="#ddd"/><circle cx="1048" cy="88" r="1.5" fill="#ddd"/><circle cx="1048" cy="75" r="1.5" fill="#ddd"/><circle cx="1045" cy="83" r="1.5" fill="#ddd"/><path d="M1063 77h9c2 3 4 5 6 6v5h-15z" fill="#8a8a8a"/><rect x="1091" y="77" width="14" height="11" fill="#8a8a8a"/><circle cx="1126" cy="82" r="6.5" fill="#8a8a8a"/><rect x="1147" y="76" width="16" height="12" fill="#7e7e7e"/><rect x="1175" y="76" width="16" height="12" fill="#7e7e7e"/><rect x="1203" y="76" width="16" height="12" fill="#7e7e7e"/><rect x="1231" y="76" width="16" height="12" fill="#7e7e7e"/><path d="M1150 79h6l4 4v3h-10z" fill="none" stroke="#c8c8c8" stroke-width="1.2"/><rect x="1178.5" y="79.5" width="9" height="6" fill="none" stroke="#c8c8c8" stroke-width="1.2"/><circle cx="1211" cy="82" r="3.5" fill="none" stroke="#c8c8c8" stroke-width="1.2"/><path d="M1239 78l2 4l-2 4l-2-4z" fill="none" stroke="#c8c8c8" stroke-width="1.2"/><rect x="1260" y="80" width="7" height="8" fill="#555"/><path d="M1266 75h10v6l-5 4l-5-4z" fill="#b8b8b8"/><rect x="1284" y="71" width="3" height="22" fill="#232325"/><rect x="1287" y="71" width="1" height="22" fill="#2f2f32"/><path d="M1295 77l4 1v10l-4-1zM1301 77l4 1v10l-4-1zM1307 77l4 1v10l-4-1z" fill="#c0c0c0"/><path d="M1323 84l2 .5v4l-2-.5zM1327 83l2 .5v5l-2-.5zM1331 82l2 .5v6l-2-.5z" fill="#c0c0c0"/><path d="M1333 80c1-4 3-5 6-5l-1-2l4 3l-3 3l0-2c-2 0-4 1-4 4z" fill="#6a6a6a"/><path d="M892 99l0 8l2.2-1.8l2.4 2.6l1-.8l-2.2-2.6l3-.2z" fill="#9a9a9a"/><path d="M902 103h7v12h-11v-3h3v-3h1z" fill="#c0c0c0"/><path d="M901 109l3 3" stroke="#333" stroke-width="1.2"/><path d="M926 99h6v9h-6z" fill="#6e6e6e"/><path d="M921 112h14" stroke="#9a9a9a"/><circle cx="921" cy="112" r="1.5" fill="#ddd"/><circle cx="934" cy="112" r="1.5" fill="#ddd"/><path d="M954 99h6v9h-6z" fill="#6e6e6e"/><path d="M949 112c3-3 5 2 8 0s5-2 7 0" fill="none" stroke="#ddd" stroke-width="1.2"/><ellipse cx="981" cy="101" rx="3" ry="1.6" fill="none" stroke="#bbb"/><path d="M988 104h7v12h-11v-3h3v-3h1z" fill="#c0c0c0"/><path d="M987 110l3 3" stroke="#333" stroke-width="1.2"/><rect x="1004" y="96" width="3" height="22" fill="#232325"/><rect x="1007" y="96" width="1" height="22" fill="#2f2f32"/><path d="M1014 110c1-6 5-8 10-8h4v8z" fill="#8a8a8a"/><rect x="1014" y="110" width="16" height="3" fill="#5a5a5a"/><rect x="1036" y="96" width="3" height="22" fill="#232325"/><rect x="1039" y="96" width="1" height="22" fill="#2f2f32"/><path d="M1048 99l0 8l2.2-1.8l2.4 2.6l1-.8l-2.2-2.6l3-.2z" fill="#9a9a9a"/><path d="M1056 105l4-3l4 1v9c-3 3-7 3-9 1z" fill="#c0c0c0"/><rect x="1053" y="104" width="4" height="5" fill="#6a6a6a"/><path transform="translate(1076 100) scale(1)" d="M4 0L0 3L2 6L3.5 5L3.5 14L12.5 14L12.5 5L14 6L16 3L12 0L10 1.5L6 1.5Z" fill="#6a6a6a"/><path d="M1080 107h2v2h-2zM1084 107h2v2h-2zM1082 109h2v2h-2zM1086 109h2v2h-2zM1080 111h2v2h-2zM1084 111h2v2h-2z" fill="#ddd"/><rect x="1102" y="97" width="23" height="20" fill="#161618" stroke="#0a0a0c" stroke-width="1"/><ellipse cx="1109" cy="102" rx="3" ry="1.6" fill="none" stroke="#bbb"/><path d="M1115 107h3v2h2v3h-2v2h-3v-2h-2v-3h2z" fill="none" stroke="#f2b51c" stroke-width="1.5"/><rect x="1130" y="96" width="3" height="22" fill="#232325"/><rect x="1133" y="96" width="1" height="22" fill="#2f2f32"/><rect x="1137" y="97" width="24" height="20" fill="#161618" stroke="#0a0a0c" stroke-width="1"/><path d="M1139 99l0 8l2.2-1.8l2.4 2.6l1-.8l-2.2-2.6l3-.2z" fill="#9a9a9a"/><rect x="1147.5" y="103.5" width="11" height="11" fill="#333" stroke="#f2b51c" stroke-width="1.5" stroke-dasharray="2 1"/><rect x="1166" y="97" width="24" height="20" fill="#161618" stroke="#0a0a0c" stroke-width="1"/><ellipse cx="1172" cy="101" rx="3" ry="1.6" fill="none" stroke="#bbb"/><rect x="1177.5" y="103.5" width="11" height="11" fill="#333" stroke="#ddd" stroke-width="1.5" stroke-dasharray="2 1"/></svg>
<!-- right panel -->
<div id="right" class="a"></div>
<div class="rh" style="top:52px"><div class="tx" style="letter-spacing:2px">オブジェクトブラウザ</div><div class="a" style="left:4px;top:4px;width:7px;height:7px;background:#b0b0b0;clip-path:polygon(0 30%,50% 30%,50% 0,100% 50%,50% 100%,50% 70%,0 70%)"></div><div class="a" style="left:13px;top:1px;width:1px;height:13px;background:#141416"></div></div>
<div class="a" style="left:1753px;top:70px;width:43px;height:15px;background:#1c1c1e"></div><div class="tx" style="letter-spacing:2px;left:1762px;top:72px;color:#8c8c8c">シーン</div>
<div class="a" style="left:1796px;top:70px;width:36px;height:15px;background:linear-gradient(#3a3a3d,#2a2a2c)"></div><div class="tx" style="letter-spacing:2px;left:1805px;top:72px;color:#f0f0f0;font-weight:bold">生地</div>
<div class="a" style="left:1833px;top:70px;width:42px;height:15px;background:#1c1c1e"></div><div class="tx" style="letter-spacing:2px;left:1841px;top:72px;color:#6f6f6f">ボタン</div>
<div class="a" style="left:1877px;top:70px;width:70px;height:15px;background:#1c1c1e"></div><div class="tx" style="letter-spacing:2px;left:1886px;top:72px;color:#6f6f6f">ボタンホール</div>
<div class="a" style="left:1947px;top:84px;width:53px;height:2px;background:#cfcfcf"></div>
<div class="a" style="left:1857px;top:100px;width:40px;height:17px;background:#2c2c2e;border:1px solid #1e1e20;border-radius:2px;box-shadow:inset 0 1px 0 #3a3a3d"></div><div class="tx" style="letter-spacing:2px;left:1861px;top:102px;color:#cfcfcf;font-size:11px">+ 追加</div>
<div class="a" style="left:1899px;top:100px;width:45px;height:17px;background:#2c2c2e;border:1px solid #1e1e20;border-radius:2px;box-shadow:inset 0 1px 0 #3a3a3d"></div><div class="a" style="left:1903px;top:104px;width:8px;height:9px;border:1px solid #888"></div><div class="tx" style="letter-spacing:2px;left:1914px;top:102px;color:#d8d8d8;font-size:11px">コピー</div>
<div class="a" style="left:1946px;top:100px;width:54px;height:17px;background:#29292b;border:1px solid #222224;border-radius:2px"></div><div class="a" style="left:1958px;top:105px;width:8px;height:8px;background:#5a5a5a"></div><div class="tx" style="letter-spacing:2px;left:1971px;top:102px;color:#5e5e5e;font-size:11px">適用</div>
<div class="dv" style="left:1760px;top:123px;width:236px"></div>
<div class="a" style="left:1792px;top:126px;width:31px;height:16px;background:#dcdcdc"></div><div class="tx" style="left:1832px;top:118px;color:#b8b8b8">Default Fabric</div>
<div class="a" style="left:1752px;top:118px;width:248px;height:6px;background:#2a2a2c"></div><div class="dv" style="left:1760px;top:123px;width:236px"></div>
<div class="dv" style="left:1764px;top:143px;width:220px"></div>
<div class="a" style="left:1792px;top:148px;width:31px;height:31px;background:#cac6b8"></div><div class="tx" style="left:1832px;top:156px;color:#c8c8c8;font-size:10.5px">migoro</div>
<div class="dv" style="left:1764px;top:181px;width:220px"></div>
<div class="a" style="left:1792px;top:185px;width:31px;height:31px;background:#cac6b8"></div><div class="tx" style="left:1832px;top:193px;color:#c8c8c8;font-size:10.5px">koshi</div>
<div class="dv" style="left:1764px;top:218px;width:220px"></div>
<div class="a" style="left:1764px;top:220px;width:220px;height:36px;background:#3c3c3f"></div>
<div class="a" style="left:1792px;top:222px;width:31px;height:32px;background:repeating-conic-gradient(#b58066 0 25%,#d8a58a 0 50%) 0 0/3px 3px"></div>
<div class="tx" style="left:1832px;top:231px;color:#ffffff;font-size:10.5px;font-weight:bold">suso</div>
<div class="a" style="left:1771px;top:232px;width:10px;height:6px;border-left:2.5px solid #f0c020;border-bottom:2.5px solid #f0c020;transform:rotate(-45deg)"></div>
<div class="a" style="left:1995px;top:125px;width:5px;height:132px;background:#1e1e20"></div><div class="a" style="left:1996px;top:140px;width:4px;height:100px;background:#3a3a3c"></div>
<div class="a" style="left:1752px;top:256px;width:248px;height:2px;background:#18181a"></div>
<div class="rh" style="top:263px"><div class="tx" style="letter-spacing:2px">属性編集</div><div class="a" style="left:4px;top:4px;width:7px;height:7px;background:#b0b0b0;clip-path:polygon(0 30%,50% 30%,50% 0,100% 50%,50% 100%,50% 70%,0 70%)"></div><div class="a" style="left:13px;top:1px;width:1px;height:13px;background:#141416"></div></div>
<div class="tx" style="letter-spacing:2px;left:1775px;top:286px">生地</div>
<div class="a" style="left:1878px;top:285px;width:59px;height:13px;background:linear-gradient(#2f2f32,#1f1f21);border:1px solid #141416;border-radius:2px"></div><div class="tx" style="letter-spacing:2px;left:1898px;top:286px;color:#bbb">開く</div>
<div class="a" style="left:1940px;top:285px;width:59px;height:13px;background:linear-gradient(#2f2f32,#1f1f21);border:1px solid #141416;border-radius:2px"></div><div class="tx" style="letter-spacing:2px;left:1960px;top:286px;color:#bbb">保存</div>
<div class="dv" style="left:1775px;top:302px;width:225px"></div>
<div class="tx" style="letter-spacing:2px;left:1775px;top:310px">名前</div><div class="tx" style="left:1912px;top:311px;color:#c8c8c8">suso</div>
<div class="dv" style="left:1775px;top:326px;width:225px"></div>
<div class="arrd" style="left:1762px;top:337px"></div><div class="tx yl" style="letter-spacing:2px;left:1775px;top:333px">材質</div>
<div class="sbtn" style="left:1984px;top:331px"></div>
<div class="dv" style="left:1775px;top:349px;width:225px"></div>
<div class="a" style="left:1775px;top:353px;width:27px;height:20px;background:linear-gradient(#36363a,#2a2a2c)"></div>
<div class="tx" style="letter-spacing:2px;left:1783px;top:357px;color:#f0f0f0;font-weight:bold">前</div><div class="tx" style="letter-spacing:2px;left:1812px;top:357px;color:#5c5c5c">後</div><div class="tx" style="letter-spacing:2px;left:1840px;top:357px;color:#5c5c5c">横</div>
<div class="a" style="left:1802px;top:372px;width:194px;height:2px;background:#b8b8b8"></div>
<div class="arrd" style="left:1778px;top:382px"></div><div class="tx" style="letter-spacing:2px;left:1791px;top:377px">テクスチャ</div>
<div class="a" style="left:1912px;top:374px;width:22px;height:21px;background:repeating-conic-gradient(#c98f72 0 25%,#e6b59a 0 50%) 0 0/3px 3px"></div>
<div class="sbtn" style="left:1964px;top:377px"></div><div class="sbtn" style="left:1980px;top:377px"></div>
<div class="dv" style="left:1791px;top:396px;width:205px"></div>
<div class="arr" style="left:1796px;top:403px"></div><div class="tx" style="letter-spacing:2px;left:1808px;top:401px">ノーマルマップ</div>
<div class="sbtn" style="left:1960px;top:400px"></div><div class="sbtn" style="left:1976px;top:400px"></div>
<div class="dv" style="left:1808px;top:419px;width:188px"></div>
<div class="tx" style="letter-spacing:2px;left:1808px;top:426px">テクスチャカラーを</div>
<div class="a" style="left:1902px;top:427px;width:10px;height:10px;background:#3a3a3d;border:1px solid #1a1a1c"></div><div class="tx" style="left:1922px;top:426px;color:#c8c8c8">Off</div>
<div class="dv" style="left:1808px;top:443px;width:188px"></div>
<div class="arr" style="left:1780px;top:453px"></div><div class="tx" style="letter-spacing:2px;left:1791px;top:450px">色</div>
<div class="a" style="left:1912px;top:448px;width:84px;height:16px;background:#dcdcdc"></div>
<div class="dv" style="left:1791px;top:469px;width:205px"></div>
<div class="arr" style="left:1780px;top:478px"></div><div class="tx" style="letter-spacing:2px;left:1791px;top:476px">鏡面反射色</div>
<div class="blk" style="left:1912px;top:474px;width:84px;height:16px"></div>
<div class="dv" style="left:1791px;top:494px;width:205px"></div>
<div class="tx" style="letter-spacing:2px;left:1791px;top:500px">鏡面反射マップ</div>
<div class="sbtn" style="left:1964px;top:499px"></div><div class="sbtn" style="left:1980px;top:499px"></div>
<div class="dv" style="left:1791px;top:519px;width:205px"></div>
<div class="tx" style="letter-spacing:2px;left:1791px;top:527px">発光色</div>
<div class="blk" style="left:1912px;top:525px;width:84px;height:16px"></div>
<div class="dv" style="left:1791px;top:545px;width:205px"></div>
<div class="arr" style="left:1780px;top:555px"></div><div class="tx" style="letter-spacing:2px;left:1791px;top:552px">テクスチャ変形</div>
<div class="dv" style="left:1791px;top:570px;width:205px"></div>
<div class="tx" style="left:1909px;top:577px;color:#d0d0d0">100</div><div class="tx" style="left:1978px;top:576px;color:#999">&#x2215;</div>
<div class="tx" style="letter-spacing:2px;left:1791px;top:584px">不透明度</div>
<div class="a" style="left:1906px;top:599px;width:81px;height:2px;background:#8a8a8a"></div><div class="a" style="left:1983px;top:596px;width:3px;height:9px;background:#b0b0b0"></div>
<div class="dv" style="left:1791px;top:610px;width:209px"></div>
<div class="arrd" style="left:1762px;top:620px"></div><div class="tx yl" style="letter-spacing:2px;left:1775px;top:617px">物性</div>
<div class="dv" style="left:1775px;top:634px;width:225px"></div>
<div class="tx" style="letter-spacing:2px;left:1791px;top:640px">プリセット値</div>
<div class="a" style="left:1870px;top:640px;width:75px;height:15px;background:#3d3d40;border-bottom:1px solid #1a1a1c"></div><div class="a" style="left:1945px;top:640px;width:13px;height:15px;background:#28282a;border:1px solid #1a1a1c"></div><div class="arrd" style="left:1948px;top:646px"></div>
<div class="sbtn" style="left:1965px;top:639px"></div><div class="sbtn" style="left:1981px;top:639px"></div>
<div class="dv" style="left:1791px;top:659px;width:209px"></div>
<div class="arr" style="left:1780px;top:667px"></div><div class="tx" style="letter-spacing:2px;left:1791px;top:665px">詳細設定</div>
<div class="dv" style="left:1791px;top:683px;width:209px"></div>
<div class="tx" style="letter-spacing:2px;left:1775px;top:689px">厚さ(mm)</div><div class="tx" style="left:1912px;top:690px;color:#d0d0d0">0.5</div><div class="tx" style="left:1984px;top:689px;color:#999">&#x2215;</div>
<div class="dv" style="left:1775px;top:706px;width:225px"></div>
<div class="a" style="left:1752px;top:807px;width:248px;height:3px;background:#18181a"></div>
<div class="rh" style="top:814px"><div class="tx" style="letter-spacing:2px">ヒストリー</div><div class="a" style="left:4px;top:4px;width:7px;height:7px;background:#b0b0b0;clip-path:polygon(0 30%,50% 30%,50% 0,100% 50%,50% 100%,50% 70%,0 70%)"></div><div class="a" style="left:13px;top:1px;width:1px;height:13px;background:#141416"></div></div>
<div class="tx" style="letter-spacing:2px;left:1756px;top:838px;color:#f4f4f4;font-weight:bold">3D衣装記録</div>
<div class="sbtn" style="left:1985px;top:837px"></div>
<div class="dv" style="left:1752px;top:858px;width:248px"></div>
<div class="a" style="left:1760px;top:865px;width:34px;height:33px;background:linear-gradient(#8a8a90,#c8c8cc);border:1px solid #d0d0d0"></div>
<div class="a" style="left:1772px;top:870px;width:10px;height:24px;background:linear-gradient(#d9b9a0 40%,#e0f0ff 40%)"></div>
<div class="tx" style="letter-spacing:2px;left:1802px;top:875px;color:#dcdcdc">3D衣装記録_1</div>
<div class="dv" style="left:1752px;top:903px;width:248px"></div>
<div class="a" style="left:1752px;top:913px;width:248px;height:3px;background:#4a4a4d"></div>
<div class="a" style="left:1752px;top:916px;width:244px;height:103px;background:#2a2a2c"></div>
<div class="a" style="left:1996px;top:916px;width:4px;height:103px;background:#1e1e20"></div>
<div class="a" style="left:1763px;top:923px;width:7px;height:7px;border-left:2px solid #c8c8c8;border-bottom:2px solid #c8c8c8;transform:rotate(-45deg)"></div><div class="a" style="left:1763px;top:928px;width:7px;height:7px;border-left:2px solid #c8c8c8;border-bottom:2px solid #c8c8c8;transform:rotate(-45deg)"></div><div class="a" style="left:1785px;top:925px;width:8px;height:8px;border:1px solid #777"></div><div class="tx" style="letter-spacing:2px;left:1799px;top:923px;color:#bdbdbd">選択</div><div class="dv" style="left:1752px;top:942px;width:244px"></div><div class="a" style="left:1763px;top:949px;width:7px;height:7px;border-left:2px solid #c8c8c8;border-bottom:2px solid #c8c8c8;transform:rotate(-45deg)"></div><div class="a" style="left:1763px;top:954px;width:7px;height:7px;border-left:2px solid #c8c8c8;border-bottom:2px solid #c8c8c8;transform:rotate(-45deg)"></div><div class="a" style="left:1785px;top:951px;width:8px;height:8px;border:1px solid #777"></div><div class="tx" style="letter-spacing:2px;left:1799px;top:949px;color:#bdbdbd">選択</div><div class="dv" style="left:1752px;top:968px;width:244px"></div><div class="a" style="left:1763px;top:974px;width:7px;height:7px;border-left:2px solid #c8c8c8;border-bottom:2px solid #c8c8c8;transform:rotate(-45deg)"></div><div class="a" style="left:1763px;top:979px;width:7px;height:7px;border-left:2px solid #c8c8c8;border-bottom:2px solid #c8c8c8;transform:rotate(-45deg)"></div><div class="a" style="left:1783px;top:974px;width:9px;height:12px;border:1.5px solid #b0b0b0;border-right:none"></div><div class="tx" style="letter-spacing:2px;left:1799px;top:974px;color:#bdbdbd">新規生地に適用</div><div class="dv" style="left:1752px;top:993px;width:244px"></div><div class="a" style="left:1752px;top:993px;width:244px;height:26px;background:#38383b"></div><div class="a" style="left:1763px;top:1000px;width:7px;height:7px;border-left:2px solid #c8c8c8;border-bottom:2px solid #c8c8c8;transform:rotate(-45deg)"></div><div class="a" style="left:1763px;top:1005px;width:7px;height:7px;border-left:2px solid #c8c8c8;border-bottom:2px solid #c8c8c8;transform:rotate(-45deg)"></div><div class="a" style="left:1783px;top:1000px;width:9px;height:12px;border:1.5px solid #b0b0b0;border-right:none"></div><div class="tx" style="letter-spacing:2px;left:1799px;top:1000px;color:#f4f4f4;font-weight:bold">テクスチャ</div>
<div id="bottom" class="a"></div>
<div class="tx" style="left:-2px;top:1024px;color:#5c5c5c;font-size:10px">ersion: 2.5.00 &nbsp;&nbsp; (33400)</div>
<div class="a" style="left:1900px;top:1026px;width:16px;height:8px;border:1px solid #777;border-bottom:none"></div>
<div class="a" style="left:1924px;top:1026px;width:16px;height:8px;border:1px solid #777;border-bottom:none"></div>
<div class="a" style="left:1948px;top:1026px;width:16px;height:8px;border:1px solid #777;border-bottom:none"></div>
<div class="a" style="left:1982px;top:1026px;width:16px;height:8px;background:#3a3a3c;border:1px solid #666;border-bottom:none"></div>
</body></html>
